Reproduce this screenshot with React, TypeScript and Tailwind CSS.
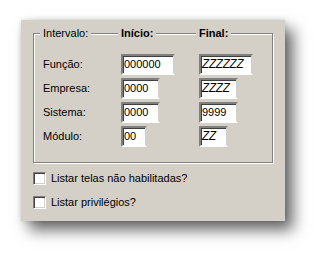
const rows = [
  { label: "Função:", start: "000000", end: "ZZZZZZ", sw: "w-[54px]", ew: "w-[54px]" },
  { label: "Empresa:", start: "0000", end: "ZZZZ", sw: "w-[39px]", ew: "w-[39px]" },
  { label: "Sistema:", start: "0000", end: "9999", sw: "w-[39px]", ew: "w-[39px]" },
  { label: "Módulo:", start: "00", end: "ZZ", sw: "w-[26px]", ew: "w-[29px]" },
];

function Field({ value, width }: { value: string; width: string }) {
  const italic = /^Z+$/.test(value);
  return (
    <div
      className={`${width} h-[21px] bg-white border-2 border-t-[#808080] border-l-[#808080] border-b-white border-r-[#d4d0c8] shadow-[inset_1px_1px_0_#404040] pl-[1px] flex items-center text-black ${
        italic ? "italic font-['Liberation_Mono',monospace] text-[12px] tracking-[-0.3px]" : ""
      }`}
    >
      {value}
    </div>
  );
}

function Check({ text }: { text: string }) {
  return (
    <label className="flex items-center h-[13px] gap-[5px]">
      <span className="w-[13px] h-[13px] bg-white border border-t-[#808080] border-l-[#808080] border-b-white border-r-white shadow-[inset_1px_1px_0_#404040,inset_-1px_-1px_0_#d4d0c8]" />
      <span className="text-[11px] text-black">{text}</span>
    </label>
  );
}

export default function App() {
  return (
    <div className="w-[327px] h-[263px] bg-white pt-[20px] pl-[21px] font-['Liberation_Sans',Arial,sans-serif] text-[11px] text-black">
      <div className="w-[264px] h-[201px] bg-[#d4d0c8] pt-[13px] pl-[12px] shadow-[8px_9px_14px_rgba(0,0,0,0.6),0_0_5px_rgba(0,0,0,0.15)]">
        <div className="w-[240px] h-[130px] border border-[#808080] shadow-[inset_1px_1px_0_#fff,1px_1px_0_#fff]">
          <div className="-mt-[7px] h-[13px] leading-[13px] grid grid-cols-[78px_78px_1fr] pl-[9px]">
            <span className="w-fit -ml-[3px] px-[3px] bg-[#d4d0c8]">Intervalo:</span>
            <span className="w-fit -ml-[3px] px-[3px] bg-[#d4d0c8] font-bold">Início:</span>
            <span className="w-fit -ml-[3px] px-[3px] bg-[#d4d0c8] font-bold">Final:</span>
          </div>
          <div className="mt-[14px] pl-[9px] grid grid-cols-[78px_78px_1fr] gap-y-[3px]">
            {rows.map((r) => (
              <div key={r.label} className="contents">
                <div className="h-[21px] flex items-center">{r.label}</div>
                <Field value={r.start} width={r.sw} />
                <Field value={r.end} width={r.ew} />
              </div>
            ))}
          </div>
        </div>
        <div className="mt-[9px] flex flex-col gap-[11px]">
          <Check text="Listar telas não habilitadas?" />
          <Check text="Listar privilégios?" />
        </div>
      </div>
    </div>
  );
}
